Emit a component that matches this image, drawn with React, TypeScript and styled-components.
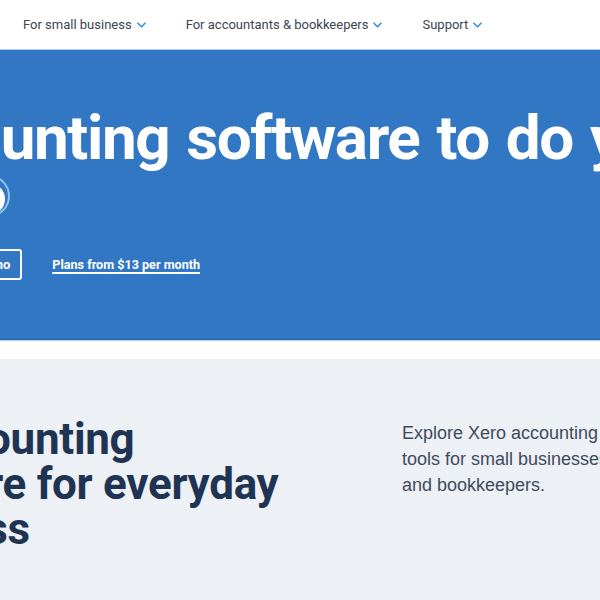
import React from 'react';
import styled, { createGlobalStyle } from 'styled-components';

const GlobalStyle = createGlobalStyle`
  html, body {
    margin: 0;
    padding: 0;
    overflow: hidden;
    background: #fff;
  }
  body {
    font-family: Roboto, "Liberation Sans", Arial, sans-serif;
    -webkit-font-smoothing: antialiased;
  }
`;

const Page = styled.div`
  width: 1200px;
  margin-left: -145px;
`;

const NavBar = styled.nav`
  display: flex;
  align-items: center;
  gap: 40px;
  height: 49px;
  padding-left: 168px;
  box-sizing: border-box;
  background: #fff;
`;

const NavItem = styled.a`
  display: inline-flex;
  align-items: center;
  gap: 5px;
  font-size: 13px;
  color: #3c4453;
  text-decoration: none;
  cursor: pointer;
`;

const Chevron = () => (
  <svg width="9" height="6" viewBox="0 0 9 6" fill="none">
    <path d="M1 1.2 4.5 4.7 8 1.2" stroke="#3a8fd9" strokeWidth="1.6" strokeLinecap="round" strokeLinejoin="round" />
  </svg>
);

const Hero = styled.section`
  height: 292px;
  box-sizing: border-box;
  background: #3277c4;
  border-top: 1px solid #a7c9ee;
  border-bottom: 1px solid #a9cdf1;
  box-shadow: inset 0 -2px 0 #2d6bb2;
  padding: 53px 0 0 10px;
  color: #fff;
`;

const HeroTitle = styled.h1`
  margin: 0;
  font-size: 62px;
  line-height: 70px;
  font-weight: 700;
  letter-spacing: -1.4px;
  word-spacing: 3px;
  white-space: nowrap;
`;

const Sticker = styled.svg`
  display: block;
  margin: -1px 0 0 100px;
`;

const Actions = styled.div`
  display: flex;
  align-items: center;
  gap: 30px;
  margin-top: 29px;
  padding-left: 57px;
`;

const OutlineButton = styled.a`
  display: inline-flex;
  align-items: center;
  height: 31px;
  box-sizing: border-box;
  padding: 0 10px;
  border: 2px solid #fff;
  border-radius: 3px;
  font-size: 13px;
  font-weight: 700;
  color: #fff;
  text-decoration: none;
`;

const PlanLink = styled.a`
  font-size: 12.6px;
  font-weight: 700;
  color: #fff;
  text-decoration: underline;
  text-decoration-thickness: 1.5px;
  text-underline-offset: 3px;
`;

const Features = styled.section`
  display: flex;
  margin-top: 18px;
  height: 260px;
  padding-top: 58px;
  box-sizing: border-box;
  background: #edf1f6;
`;

const FeaturesTitle = styled.h2`
  width: 547px;
  margin: 0;
  font-size: 44px;
  line-height: 45px;
  font-weight: 700;
  letter-spacing: -0.3px;
  color: #1f3452;
`;

const FeaturesText = styled.p`
  margin: 3px 0 0;
  font-family: "Liberation Sans", Arial, sans-serif;
  font-size: 18px;
  line-height: 26px;
  color: #404a5b;
  white-space: nowrap;
`;

export default function App() {
  return (
    <>
      <GlobalStyle />
      <Page>
        <NavBar>
          <NavItem>For small business <Chevron /></NavItem>
          <NavItem>For accountants &amp; bookkeepers <Chevron /></NavItem>
          <NavItem>Support <Chevron /></NavItem>
        </NavBar>

        <Hero>
          <HeroTitle>Accounting software to do your best work</HeroTitle>
          <Sticker width="48" height="48" viewBox="0 0 48 48">
            <circle cx="24" cy="24" r="20" fill="none" stroke="#8fc4f2" strokeWidth="2" />
            <circle cx="24" cy="27" r="16" fill="#fff" />
          </Sticker>
          <Actions>
            <OutlineButton>Book a demo</OutlineButton>
            <PlanLink>Plans from $13 per month</PlanLink>
          </Actions>
        </Hero>

        <Features>
          <FeaturesTitle>
            All accounting
            <br />
            software for everyday
            <br />
            business
          </FeaturesTitle>
          <FeaturesText>
            Explore Xero accounting software features and
            <br />
            tools for small businesses, accountants
            <br />
            and bookkeepers.
          </FeaturesText>
        </Features>
      </Page>
    </>
  );
}
